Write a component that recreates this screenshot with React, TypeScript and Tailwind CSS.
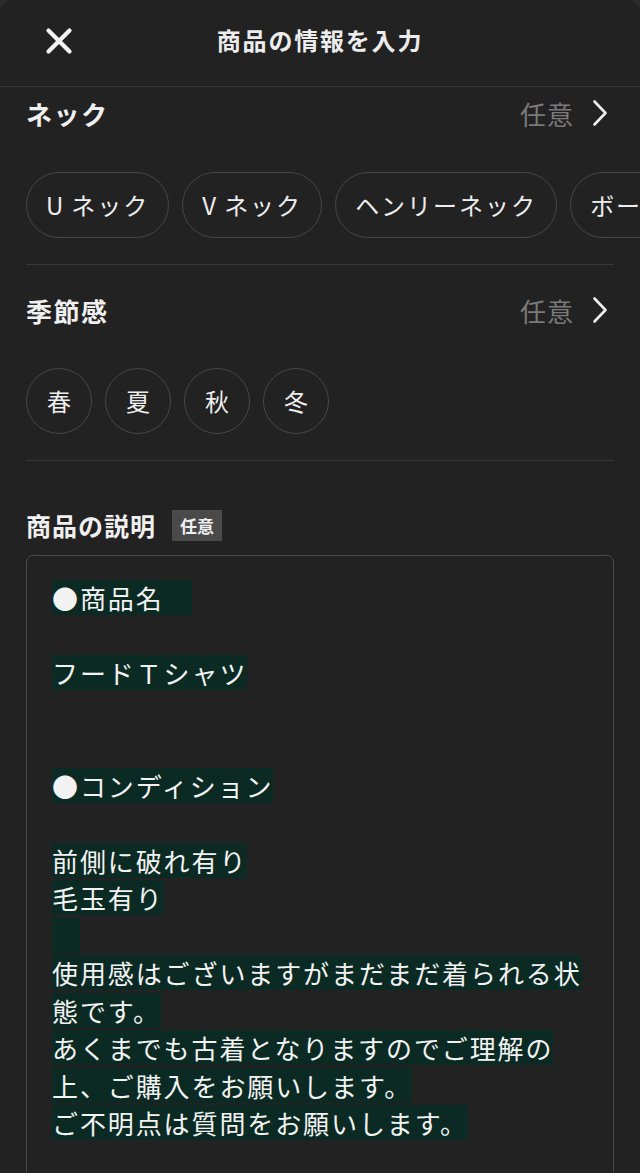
import { X } from "lucide-react";

const font = "font-['Noto_Sans_CJK_JP','Noto_Sans',sans-serif]";

const necks = [
  { lead: "U", rest: "ネック" },
  { lead: "V", rest: "ネック" },
  { lead: "", rest: "ヘンリーネック" },
  { lead: "", rest: "ボートネック" },
  { lead: "", rest: "タートルネック" },
];
const seasons = ["春", "夏", "秋", "冬"];

// null = empty line without highlight
const lines: (string | null)[] = [
  "●商品名　",
  null,
  "フードＴシャツ",
  null,
  null,
  "●コンディション",
  null,
  "前側に破れ有り",
  "毛玉有り",
  "　",
  "使用感はございますがまだまだ着られる状",
  "態です。",
  "あくまでも古着となりますのでご理解の",
  "上、ご購入をお願いします。",
  "ご不明点は質問をお願いします。",
];

function Chevron() {
  return (
    <svg width="18" height="28" viewBox="0 0 18 28" fill="none" className="text-[#eeeeee]">
      <path
        d="M3.5 2.5 L14.5 14 L3.5 25.5"
        stroke="currentColor"
        strokeWidth="2.6"
        strokeLinecap="round"
        strokeLinejoin="round"
      />
    </svg>
  );
}

function SectionHeader({ title }: { title: string }) {
  return (
    <div className="flex h-[52px] items-center justify-between">
      <div className="text-[26px] font-bold tracking-[1.5px] text-[#f0f0f0]">
        {title}
      </div>
      <div className="mr-[5px] flex items-center gap-[17px]">
        <span className="text-[26px] tracking-[1px] text-[#7a7a7a]">任意</span>
        <Chevron />
      </div>
    </div>
  );
}

export default function App() {
  return (
    <div className={`h-[1173px] overflow-hidden bg-[#2a2a2a] ${font}`}>
      <div className="h-full rounded-tl-[14px] rounded-tr-[14px] bg-[#222222]">
        {/* header */}
        <div className="relative flex h-[87px] items-center justify-center border-b border-[#363636]">
          <button className="absolute left-[38px] top-[20px] text-[#f2f2f2]">
            <X size={42} strokeWidth={2.4} />
          </button>
          <div className="mt-[-6px] text-[24px] font-bold tracking-[1.8px] text-[#ececec]">
            商品の情報を入力
          </div>
        </div>

        <div className="px-[26px]">
          {/* neck */}
          <SectionHeader title="ネック" />
          <div className="mr-[-27px] mt-[33px] flex gap-[13px] overflow-hidden">
            {necks.map((n) => (
              <div
                key={n.lead + n.rest}
                className="flex h-[66px] shrink-0 items-center rounded-full border-[1.5px] border-[#474747] px-[19px] text-[24px] tracking-[2px] text-[#eeeeee]"
              >
                {n.lead && <span className="mr-[6px]">{n.lead}</span>}
                {n.rest}
              </div>
            ))}
          </div>
          <div className="mt-[26px] border-b border-[#363636]" />

          {/* season */}
          <div className="pt-[19px]">
            <SectionHeader title="季節感" />
          </div>
          <div className="mt-[32px] flex gap-[13px]">
            {seasons.map((s) => (
              <div
                key={s}
                className="flex h-[66px] w-[66px] items-center justify-center rounded-full border-[1.5px] border-[#474747] text-[24px] text-[#eeeeee]"
              >
                {s}
              </div>
            ))}
          </div>
          <div className="mt-[26px] border-b border-[#363636]" />

          {/* description */}
          <div className="mt-[49px] flex h-[31px] items-center gap-[16px]">
            <div className="text-[25px] font-bold tracking-[1px] text-[#f0f0f0]">
              商品の説明
            </div>
            <span className="flex h-[31px] w-[50px] items-center justify-center bg-[#4a4a4a] text-[17px] font-bold text-[#f0f0f0]">
              任意
            </span>
          </div>
          <div className="mt-[14px] h-[700px] rounded-[7px] border-[1.5px] border-[#4a4a4a] pl-[25px] pr-[20px] pt-[23px]">
            {lines.map((l, i) => (
              <div key={i} className="h-[37.5px] pt-[1px]">
                {l !== null && (
                  <span className="inline-block h-[35px] whitespace-pre bg-[#0b2a23] text-[26px] leading-[35px] tracking-[1.9px] text-[#f2f2f2]">
                    {l}
                  </span>
                )}
              </div>
            ))}
          </div>
        </div>
      </div>
    </div>
  );
}
